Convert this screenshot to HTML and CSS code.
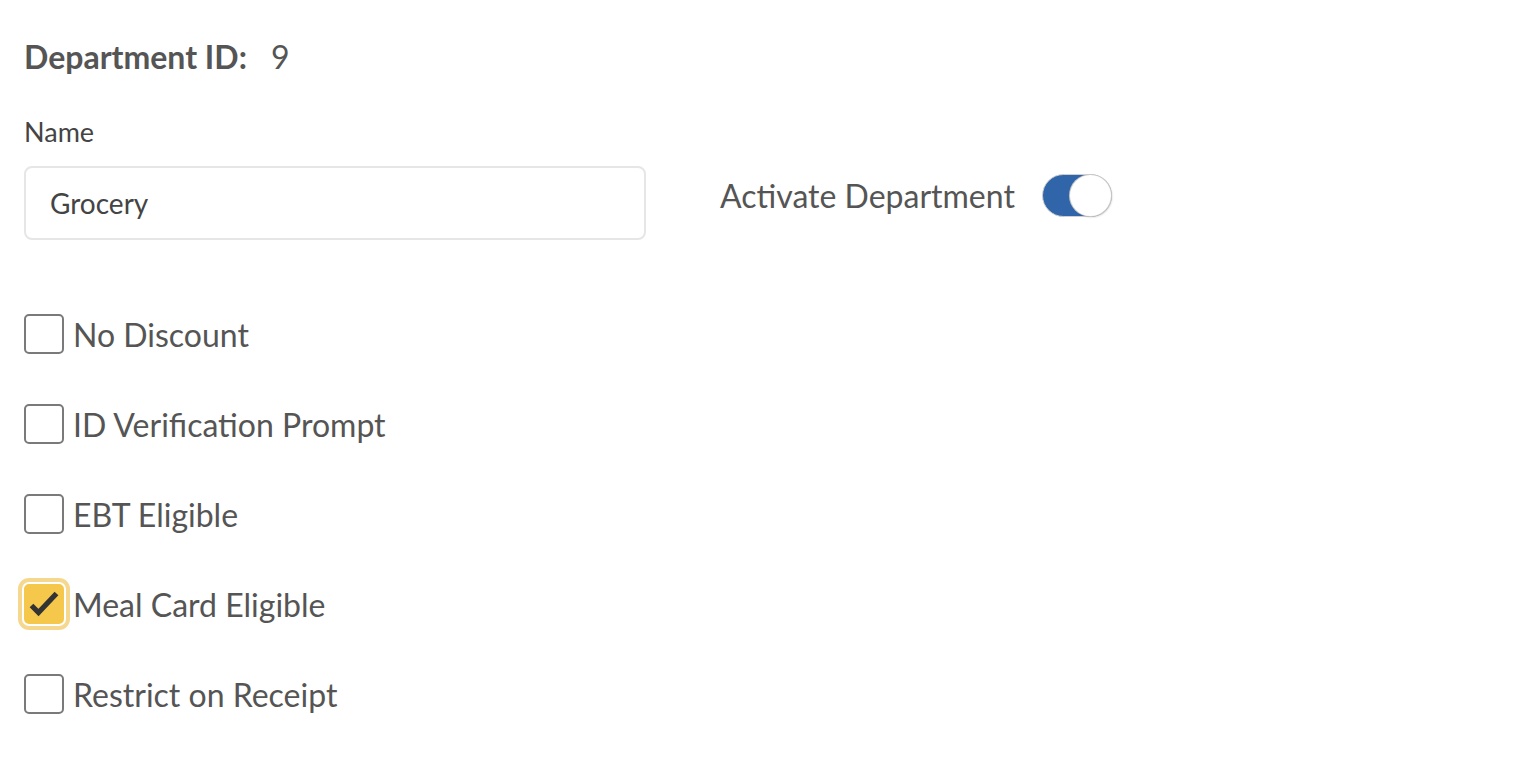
FILE: index.html
```html
<!DOCTYPE html>
<html lang="en">
<head>
<meta charset="utf-8">
<title>Department</title>
<link rel="stylesheet" href="styles.css">
</head>
<body>
<div class="page">
  <div class="id-row">
    <span class="id-label">Department ID:</span>
    <span class="id-value">9</span>
  </div>
  <div class="top-grid">
    <div class="field">
      <label class="field-label" for="name">Name</label>
      <input class="text-input" id="name" type="text" value="Grocery">
    </div>
    <div class="activate">
      <span class="activate-label">Activate Department</span>
      <span class="toggle is-on"><span class="knob"></span></span>
    </div>
  </div>
  <div class="checks">
    <div class="check-row"><span class="box"></span><span class="check-label">No Discount</span></div>
    <div class="check-row"><span class="box"></span><span class="check-label">ID Verification Prompt</span></div>
    <div class="check-row"><span class="box"></span><span class="check-label">EBT Eligible</span></div>
    <div class="check-row"><span class="box is-checked"><svg class="tick" viewBox="0 0 40 40" width="40" height="40"><path d="M7.5 21.5 L14.5 28.5 L32.5 9.5" fill="none" stroke="#333" stroke-width="5.2" stroke-linejoin="miter"/></svg></span><span class="check-label">Meal Card Eligible</span></div>
    <div class="check-row"><span class="box"></span><span class="check-label">Restrict on Receipt</span></div>
  </div>
</div>
</body>
</html>
```
FILE: styles.css
```css
* { box-sizing: border-box; }
html, body { margin: 0; padding: 0; background: #fff; }
body {
  font-family: Lato, "Open Sans", sans-serif;
  color: #555;
}
.page {
  padding: 38px 0 0 24px;
}
.id-row {
  display: flex;
  align-items: baseline;
  gap: 24px;
  font-size: 32px;
  line-height: 38px;
  color: #555;
}
.id-label { font-weight: 700; }
.id-value { font-weight: 400; }

.top-grid {
  margin-top: 40px;
  display: grid;
  grid-template-columns: 622px auto;
  column-gap: 74px;
  align-items: start;
}
.field { display: flex; flex-direction: column; }
.field-label {
  font-size: 27px;
  line-height: 32px;
  color: #444;
  margin-bottom: 18px;
}
.text-input {
  height: 74px;
  width: 100%;
  border: 2px solid #e6e6e6;
  border-radius: 8px;
  padding: 0 0 0 24px;
  font-family: Lato, "Open Sans", sans-serif;
  font-size: 28px;
  color: #444;
  outline: none;
  background: #fff;
}
.activate {
  margin-top: 58px;
  display: flex;
  align-items: center;
  gap: 27px;
  height: 43px;
}
.activate-label {
  font-size: 32px;
  color: #555;
  white-space: nowrap;
}
.toggle {
  width: 70px;
  height: 43px;
  border-radius: 22px;
  background: #3165aa;
  border: 1px solid #cfcfcf;
  display: flex;
  align-items: center;
  justify-content: flex-end;
  padding: 0;
}
.knob {
  width: 41px;
  height: 41px;
  border-radius: 50%;
  background: #fff;
  box-shadow: 0 0 0 1px #c8c8c8, 1px 1px 2px rgba(0,0,0,0.25);
}

.checks {
  margin-top: 74px;
  display: flex;
  flex-direction: column;
  gap: 50px;
}
.check-row {
  display: flex;
  align-items: center;
  gap: 9px;
  height: 40px;
}
.box {
  width: 40px;
  height: 40px;
  border: 2px solid #7a7a7a;
  border-radius: 5px;
  background: #fff;
  flex: none;
  position: relative;
}
.box.is-checked {
  background: #f5c84c;
  border-color: #f5c84c;
  box-shadow: 0 0 0 2px #fff, 0 0 0 6px #f5d88e;
}
.tick {
  position: absolute;
  left: -2px;
  top: -2px;
}
.check-label {
  font-size: 32px;
  color: #555;
  white-space: nowrap;
}
```
